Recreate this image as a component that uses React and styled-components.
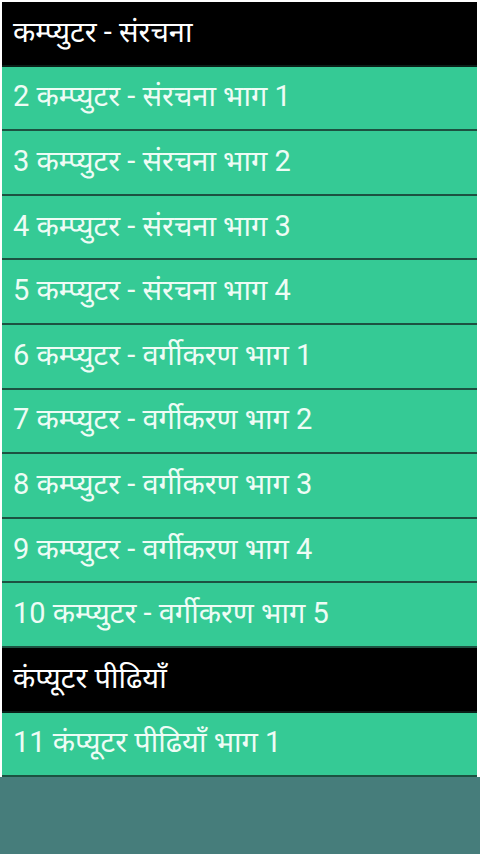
import React from "react";
import styled, { createGlobalStyle } from "styled-components";

const Global = createGlobalStyle`
  html, body { margin: 0; padding: 0; background: #ffffff; }
  #root { width: 480px; height: 854px; }
`;

const Screen = styled.div`
  display: flex;
  flex-direction: column;
  width: 480px;
  height: 854px;
  box-sizing: border-box;
  padding: 2px 3px 0 2px;
  background: #ffffff;
  font-family: Roboto, "Noto Sans Devanagari", "Noto Sans", sans-serif;
`;

const List = styled.div`
  display: flex;
  flex-direction: column;
`;

const Item = styled.div`
  display: flex;
  align-items: center;
  box-sizing: border-box;
  height: 64.6px;
  padding: 2px 0 0 11px;
  background: ${(p) => (p.$header ? "#000000" : "#35ca95")};
  border-bottom: 2px solid ${(p) => (p.$header ? "#0a1f18" : "#1c5241")};
  color: ${(p) => (p.$header ? "#ffffff" : "#eefcf5")};
  font-size: 29px;
  white-space: nowrap;
  overflow: hidden;
`;

const Footer = styled.div`
  flex: 1;
  margin: 0 -3px 0 -2px;
  background: #467d7b;
`;

const rows = [
  { h: true, t: "कम्प्युटर - संरचना" },
  { t: "2 कम्प्युटर - संरचना भाग 1" },
  { t: "3 कम्प्युटर - संरचना भाग 2" },
  { t: "4 कम्प्युटर - संरचना भाग 3" },
  { t: "5 कम्प्युटर - संरचना भाग 4" },
  { t: "6 कम्प्युटर - वर्गीकरण भाग 1" },
  { t: "7 कम्प्युटर - वर्गीकरण भाग 2" },
  { t: "8 कम्प्युटर - वर्गीकरण भाग 3" },
  { t: "9 कम्प्युटर - वर्गीकरण भाग 4" },
  { t: "10 कम्प्युटर - वर्गीकरण भाग 5" },
  { h: true, t: "कंप्यूटर पीढियाँ" },
  { t: "11 कंप्यूटर पीढियाँ भाग 1" },
];

export default function App() {
  return (
    <>
      <Global />
      <Screen>
        <List>
          {rows.map((r, i) => (
            <Item key={i} $header={r.h}>
              {r.t}
            </Item>
          ))}
        </List>
        <Footer />
      </Screen>
    </>
  );
}
